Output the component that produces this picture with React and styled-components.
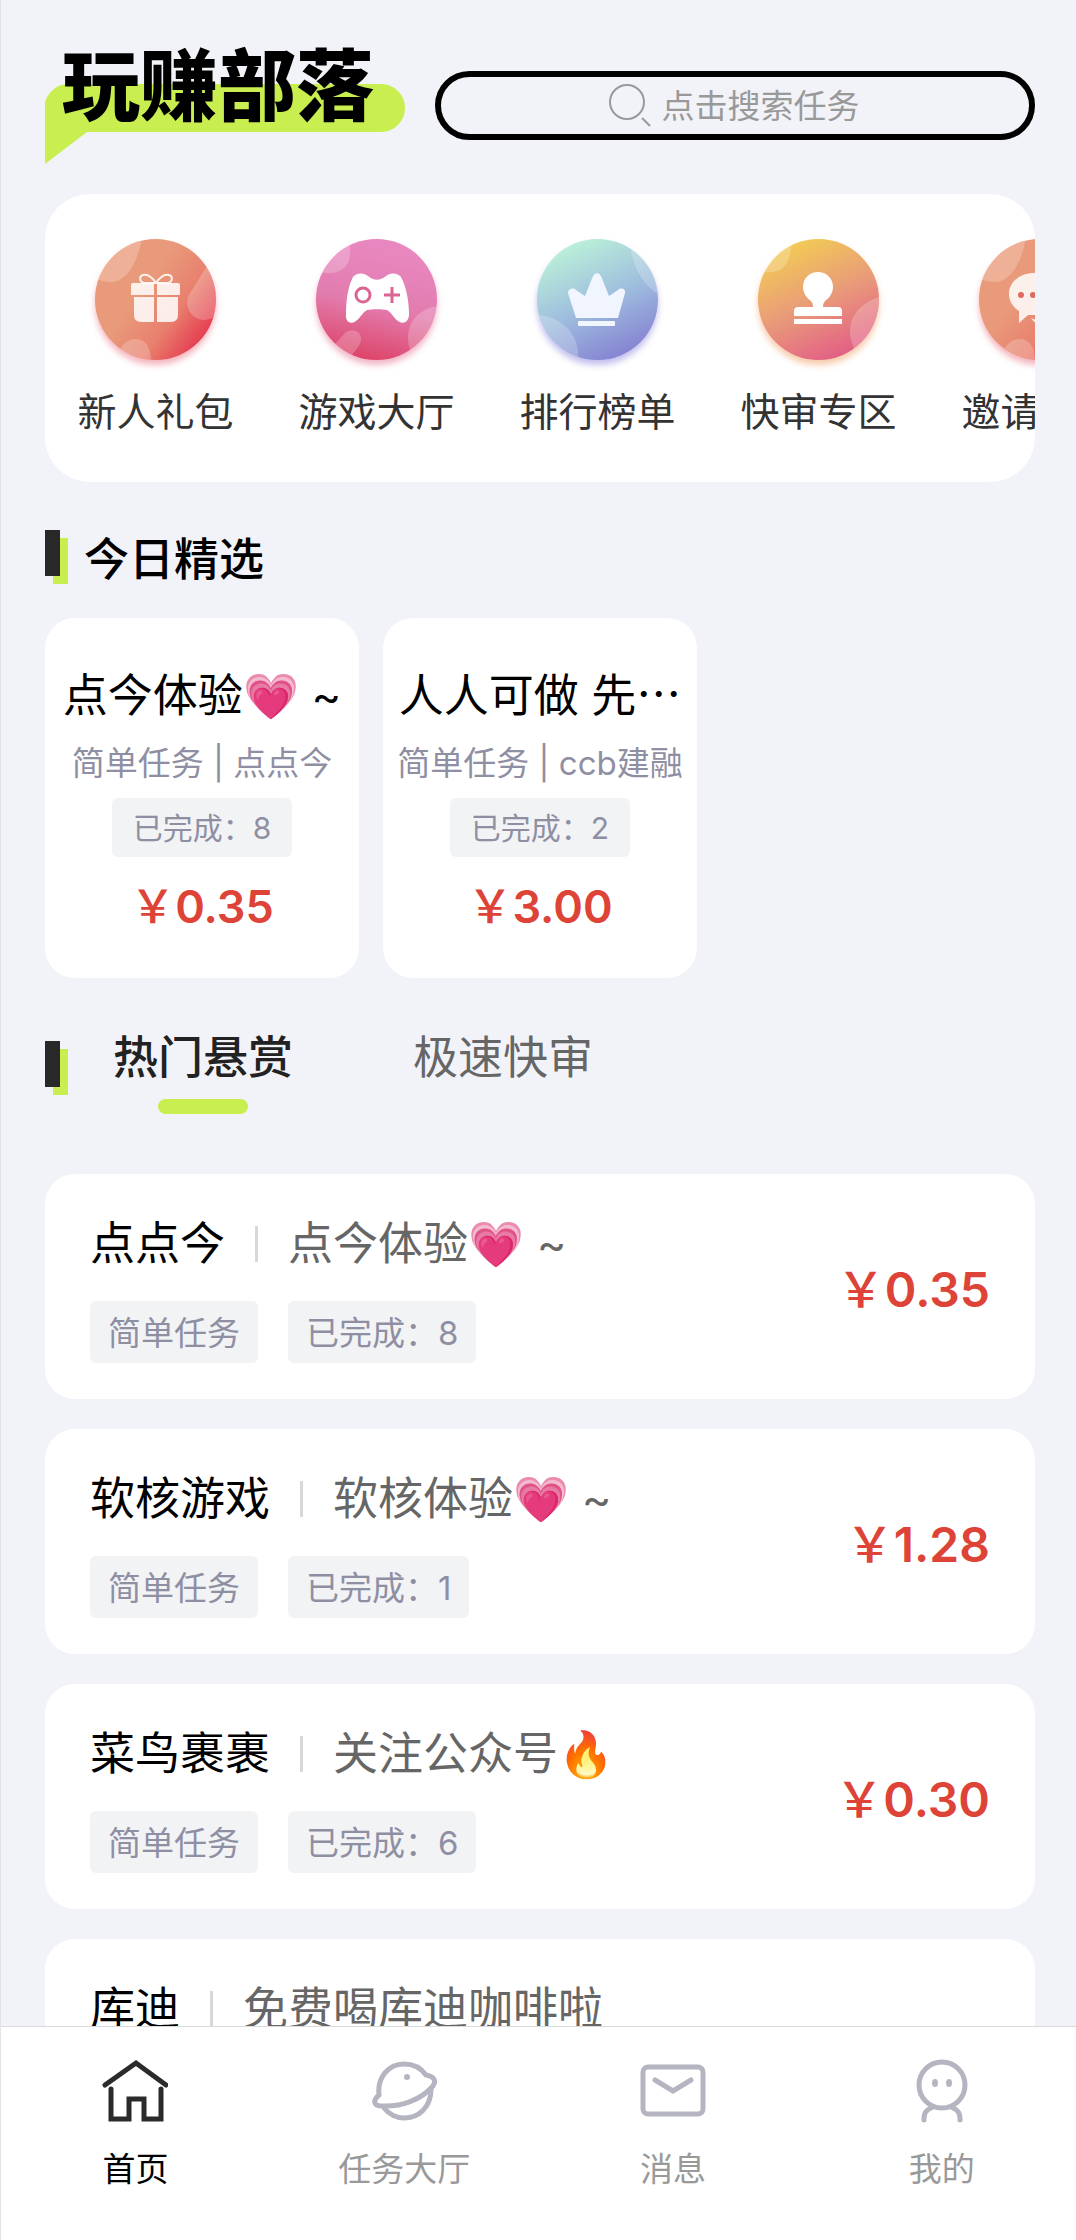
import React, { useState } from 'react';
import styled, { createGlobalStyle } from 'styled-components';

const quickLinks = [
  { label: '新人礼包', icon: 'gift', shadow: 'rgba(228, 70, 90, 0.4)' },
  { label: '游戏大厅', icon: 'game', shadow: 'rgba(221, 72, 112, 0.4)' },
  { label: '排行榜单', icon: 'crown', shadow: 'rgba(134, 128, 220, 0.5)' },
  { label: '快审专区', icon: 'stamp', shadow: 'rgba(240, 150, 90, 0.5)' },
  { label: '邀请好友', icon: 'chat', shadow: 'rgba(228, 70, 90, 0.4)' },
];

const picks = [
  { title: '点今体验💗 ~', type: '简单任务', brand: '点点今', done: 8, price: '0.35' },
  { title: '人人可做 先⋯', type: '简单任务', brand: 'ccb建融', done: 2, price: '3.00' },
];

const tasks = [
  { brand: '点点今', title: '点今体验💗 ~', type: '简单任务', done: 8, price: '0.35' },
  { brand: '软核游戏', title: '软核体验💗 ~', type: '简单任务', done: 1, price: '1.28' },
  { brand: '菜鸟裹裹', title: '关注公众号🔥', type: '简单任务', done: 6, price: '0.30' },
  { brand: '库迪', title: '免费喝库迪咖啡啦', type: '简单任务', done: 3, price: '0.50' },
];

const tabs = ['热门悬赏', '极速快审'];

const navItems = [
  { label: '首页', icon: 'home' },
  { label: '任务大厅', icon: 'planet' },
  { label: '消息', icon: 'mail' },
  { label: '我的', icon: 'person' },
];

const gradients = {
  gift: { dir: [0.4, 0.4, 0.95, 0.8], stops: ['#e99a7a', '#e8806e', '#e4364e'] },
  game: { dir: [0.6, 0.1, 0.4, 1], stops: ['#e887bf', '#e27cae', '#dd4468'] },
  crown: { dir: [0.25, 0.05, 0.7, 1], stops: ['#bbf0d8', '#9fbfde', '#8480d2'] },
  stamp: { dir: [0.25, 0.05, 0.7, 1], stops: ['#f2cb55', '#e99a7a', '#e25c86'] },
  chat: { dir: [0.4, 0.4, 0.95, 0.9], stops: ['#e99a7a', '#e8806e', '#e4364e'] },
};

const lobes = {
  gift: (
    <>
      <path d="M47-2C44 18 34 42 17 43C10 43 4 42-2 38V-2Z" />
      <path d="M112 27L94 56C89 64 94 80 108 81C114 81 118 79 122 76V27Z" />
      <path d="M24 112C28 104 34 100 41 100C50 100 56 108 56 122H24Z" />
    </>
  ),
  game: (
    <>
      <path d="M34-2V14C34 26 26 34 14 34C9 34 5 34-2 32V-2Z" />
      <path d="M122 67C106 69 92 80 92 98C92 104 93 108 95 114L122 122Z" />
      <path d="M18 106L29 94C35 89 45 91 45 100C45 105 41 110 34 118Z" />
    </>
  ),
  crown: (
    <>
      <path d="M93-2C93 18 100 42 122 56V-2Z" />
      <path d="M-2 76C22 76 44 94 41 122H-2Z" />
    </>
  ),
  stamp: (
    <>
      <path d="M34-2C34 16 29 29 20 32C14 33 8 34-2 33V-2Z" />
      <path d="M122 58C104 63 92 76 92 92C92 99 94 105 97 112L122 118Z" />
    </>
  ),
  chat: (
    <>
      <path d="M47-2C44 18 34 42 17 43C10 43 4 42-2 38V-2Z" />
      <path d="M24 112C28 104 34 100 41 100C50 100 56 108 56 122H24Z" />
    </>
  ),
};

const symbols = {
  gift: (
    <g fill="#fff" fillOpacity="0.85">
      <path d="M38 44H59V56H36V46Q36 44 38 44ZM62 44H83Q85 44 85 46V56H62Z" />
      <path d="M39 58H59V83H46Q39 83 39 76ZM62 58H83V76Q83 83 76 83H62Z" />
      <path
        d="M61 44C57 38 52 35 48 36C44 37 44 43 49 44ZM61 44C65 38 70 35 74 36C78 37 78 43 73 44Z"
        fill="none"
        stroke="#fff"
        strokeOpacity="0.85"
        strokeWidth="2"
      />
    </g>
  ),
  game: (
    <g>
      <path
        fill="#fff"
        d="M37 38C40 34 47 33 52 37C58 42 64 42 70 37C75 33 82 34 85 38C90 47 93 62 93 75C93 83 87 86 82 82C77 78 75 73 71 71C66 70 56 70 51 71C47 73 45 78 40 82C35 86 29 83 30 75C30 62 32 47 37 38Z"
      />
      <circle cx="47" cy="56" r="7" fill="none" stroke="#dc6495" strokeWidth="3" />
      <path d="M68 56H84M76 48V64" stroke="#dc6495" strokeWidth="3" />
    </g>
  ),
  crown: (
    <g fill="#f1f5ff">
      <path d="M39 79L31 54C31 50 36 48 39 51L48 57L56 37Q60 31 64 37L72 57L81 51C84 48 89 50 88 54L81 79Z" />
      <rect x="41" y="82" width="37" height="5" rx="1" />
    </g>
  ),
  stamp: (
    <g fill="#fff">
      <path d="M60 33C68 33 75 39 75 48C75 55 70 60 67 62Q65 64 65 68H80Q84 68 84 72V77H36V72Q36 68 40 68H55Q55 64 53 62C50 60 45 55 45 48C45 39 52 33 60 33Z" />
      <rect x="36" y="80" width="48" height="5" />
    </g>
  ),
  chat: (
    <g>
      <path
        fill="#fff"
        fillOpacity="0.85"
        d="M55 34C69 34 80 43 80 55C80 67 69 76 55 76L49 76L40 84V72C34 68 30 62 30 55C30 43 41 34 55 34Z"
      />
      <path fill="#fff" fillOpacity="0.85" d="M52 79C62 84 72 80 82 70C90 78 86 84 84 86V92L78 87C68 90 58 88 52 79Z" />
      <circle cx="42" cy="56" r="3" fill="#dd6a5c" />
      <circle cx="54" cy="56" r="3" fill="#dd6a5c" />
      <circle cx="66" cy="56" r="3" fill="#dd6a5c" />
    </g>
  ),
};

const navShapes = {
  home: (
    <>
      <path d="M3 27L34 5L64 27" />
      <path d="M9 31V61H27V41H42V61H59V31" />
    </>
  ),
  planet: (
    <>
      <path d="M8 37C6 20 17 6 33 6C43 6 50 10 55 17C62 18 66 22 62 28C50 42 30 49 11 48C3 48 1 43 8 37Z" />
      <path d="M13 50C18 56 25 60 33 60C48 60 60 49 60 31" />
      <circle cx="36" cy="19" r="3" fill="currentColor" stroke="none" />
    </>
  ),
  mail: (
    <>
      <rect x="3" y="9" width="60" height="47" rx="5" />
      <path d="M15 22L33 33L51 22" />
    </>
  ),
  person: (
    <>
      <circle cx="33" cy="27" r="23" />
      <ellipse cx="26" cy="25" rx="3" ry="4" fill="currentColor" stroke="none" />
      <ellipse cx="40" cy="25" rx="3" ry="4" fill="currentColor" stroke="none" />
      <path d="M15 62V60Q15 53 22 50M51 62V60Q51 53 44 50" />
    </>
  ),
};

const QuickIcon = ({ name, shadow }) => {
  const { dir, stops } = gradients[name];
  return (
    <QuickSvg viewBox="0 0 121 121" $shadow={shadow} aria-hidden="true">
      <defs>
        <linearGradient id={`fill-${name}`} x1={dir[0]} y1={dir[1]} x2={dir[2]} y2={dir[3]}>
          <stop offset="0" stopColor={stops[0]} />
          <stop offset="0.5" stopColor={stops[1]} />
          <stop offset="1" stopColor={stops[2]} />
        </linearGradient>
        <clipPath id={`clip-${name}`}>
          <circle cx="60.5" cy="60.5" r="60.5" />
        </clipPath>
      </defs>
      <circle cx="60.5" cy="60.5" r="60.5" fill={`url(#fill-${name})`} />
      <g clipPath={`url(#clip-${name})`} fill="#fff" fillOpacity="0.22">
        {lobes[name]}
      </g>
      {symbols[name]}
    </QuickSvg>
  );
};

const Logo = () => (
  <LogoSvg viewBox="0 0 360 117" role="img" aria-label="玩赚部落">
    <path d="M0 55C4 44 12 37 24 37H336A24 24 0 0 1 336 85H42L0 117Z" fill="#c8ef4f" />
    <LogoText x="17" y="68">玩赚部落</LogoText>
  </LogoSvg>
);

const App = () => {
  const [tab, setTab] = useState(tabs[0]);
  const [page, setPage] = useState('首页');

  return (
    <Screen>
      <GlobalStyle />
      <Content>
        <Header>
          <Logo />
          <SearchBox>
            <SearchSvg viewBox="0 0 42 43" aria-hidden="true">
              <circle cx="18" cy="18" r="17" />
              <path d="M33 34L41 42" />
            </SearchSvg>
            <SearchInput type="text" placeholder="点击搜索任务" aria-label="搜索任务" />
          </SearchBox>
        </Header>

        <QuickCard>
          {quickLinks.map((item) => (
            <QuickLink href="#" key={item.label}>
              <QuickIcon name={item.icon} shadow={item.shadow} />
              <span>{item.label}</span>
            </QuickLink>
          ))}
        </QuickCard>

        <SectionHead>
          <Marker />
          <SectionTitle>今日精选</SectionTitle>
        </SectionHead>

        <PickRow>
          {picks.map((item) => (
            <PickCard key={item.title}>
              <PickTitle>{item.title}</PickTitle>
              <PickMeta>{item.type} | {item.brand}</PickMeta>
              <Tag $small>已完成：{item.done}</Tag>
              <PickPrice><Yen>￥</Yen>{item.price}</PickPrice>
            </PickCard>
          ))}
        </PickRow>

        <TabRow>
          <Marker $low />
          <TabList role="tablist">
            {tabs.map((name) => (
              <Tab
                key={name}
                type="button"
                role="tab"
                aria-selected={tab === name}
                $active={tab === name}
                onClick={() => setTab(name)}
              >
                {name}
              </Tab>
            ))}
          </TabList>
        </TabRow>

        <TaskList>
          {tasks.map((task) => (
            <TaskCard key={task.brand}>
              <div>
                <TaskHead>
                  <Brand>{task.brand}</Brand>
                  <Divider />
                  <TaskTitle>{task.title}</TaskTitle>
                </TaskHead>
                <TagRow>
                  <Tag>{task.type}</Tag>
                  <Tag>已完成：{task.done}</Tag>
                </TagRow>
              </div>
              <Price><Yen>￥</Yen>{task.price}</Price>
            </TaskCard>
          ))}
        </TaskList>
      </Content>

      <NavBar>
        {navItems.map((item) => (
          <NavLink
            href="#"
            key={item.label}
            $active={page === item.label}
            onClick={() => setPage(item.label)}
          >
            <NavSvg viewBox="0 0 66 66" $active={page === item.label} aria-hidden="true">
              {navShapes[item.icon]}
            </NavSvg>
            <span>{item.label}</span>
          </NavLink>
        ))}
      </NavBar>
    </Screen>
  );
};

const GlobalStyle = createGlobalStyle`
  * {
    box-sizing: border-box;
  }
  body {
    margin: 0;
    background: #f2f3f8;
    font-family: Inter, "Noto Sans CJK SC", sans-serif;
    color: #000;
  }
  h2, h3, p, ul {
    margin: 0;
    padding: 0;
  }
  a {
    color: inherit;
    text-decoration: none;
  }
`;

const Screen = styled.div`
  display: flex;
  flex-direction: column;
  height: 100vh;
  border-left: 1px solid #e2e3e8;
`;

const Content = styled.main`
  flex: 1;
  min-height: 0;
  overflow-y: auto;
  scrollbar-width: none;
  padding: 47px 41px 30px 44px;
`;

const Header = styled.header`
  display: flex;
  align-items: center;
  gap: 30px;
  margin-bottom: 30px;
`;

const LogoSvg = styled.svg`
  flex: none;
  width: 360px;
  height: 117px;
  overflow: visible;
`;

const LogoText = styled.text`
  font-family: "Noto Sans CJK SC", sans-serif;
  font-size: 78px;
  font-weight: 900;
`;

const SearchBox = styled.label`
  flex: 1;
  display: flex;
  align-items: center;
  justify-content: center;
  gap: 11px;
  height: 69px;
  border: 6px solid #000;
  border-radius: 35px;
`;

const SearchSvg = styled.svg`
  flex: none;
  width: 42px;
  height: 43px;
  fill: none;
  stroke: #999;
  stroke-width: 2;
`;

const SearchInput = styled.input`
  width: 200px;
  padding: 0;
  border: none;
  outline: none;
  background: none;
  font-family: inherit;
  font-size: 33px;
  line-height: 48px;
  &::placeholder {
    color: #999;
    opacity: 1;
  }
`;

const QuickCard = styled.nav`
  display: flex;
  overflow-x: auto;
  scrollbar-width: none;
  padding: 45px 0 43px;
  background: #fff;
  border-radius: 45px;
`;

const QuickLink = styled.a`
  flex: 0 0 221px;
  display: flex;
  flex-direction: column;
  align-items: center;
  gap: 25px;
  font-size: 39px;
  line-height: 54px;
  color: #333;
`;

const QuickSvg = styled.svg`
  width: 121px;
  height: 121px;
  overflow: visible;
  filter: drop-shadow(0 5px 3px ${({ $shadow }) => $shadow});
`;

const SectionHead = styled.div`
  display: flex;
  gap: 24px;
  margin: 48px 0 28px;
`;

const Marker = styled.span`
  flex: none;
  width: 15px;
  height: 46px;
  margin-top: ${({ $low }) => ($low ? '13px' : '0')};
  background: #282828;
  box-shadow: 8px 8px 0 #c8ef4f;
`;

const SectionTitle = styled.h2`
  font-size: 45px;
  line-height: 60px;
  font-weight: 500;
`;

const PickRow = styled.div`
  display: flex;
  gap: 24px;
`;

const PickCard = styled.article`
  display: flex;
  flex-direction: column;
  align-items: center;
  width: 314px;
  padding: 48px 12px 41px;
  background: #fff;
  border-radius: 30px;
  white-space: nowrap;
`;

const PickTitle = styled.h3`
  font-size: 45px;
  line-height: 60px;
  font-weight: 400;
`;

const PickMeta = styled.p`
  margin: 13px 0 11px;
  font-size: 33px;
  line-height: 48px;
  color: #8f8fa3;
`;

const Tag = styled.span`
  padding: ${({ $small }) => ($small ? '2px 21px 0' : '2px 18px 0')};
  font-size: ${({ $small }) => ($small ? '30px' : '33px')};
  line-height: ${({ $small }) => ($small ? '57px' : '60px')};
  color: #8f8fa3;
  background: #f2f3f5;
  border-radius: 6px;
`;

const Price = styled.strong`
  padding-top: 2px;
  font-size: 48px;
  line-height: 60px;
  font-weight: 600;
  color: #dd4337;
`;

const PickPrice = styled(Price)`
  margin-top: 18px;
  font-size: 45px;
`;

const Yen = styled.span`
  font-weight: 500;
`;

const TabRow = styled.div`
  display: flex;
  gap: 53px;
  margin: 50px 0 60px;
`;

const TabList = styled.div`
  display: flex;
  gap: 120px;
`;

const Tab = styled.button`
  display: flex;
  flex-direction: column;
  align-items: center;
  gap: 11px;
  padding: 0;
  border: none;
  background: none;
  font-family: inherit;
  font-size: 45px;
  line-height: 60px;
  font-weight: ${({ $active }) => ($active ? 500 : 400)};
  color: ${({ $active }) => ($active ? '#222' : '#666')};
  cursor: pointer;
  &::after {
    content: '';
    width: 90px;
    height: 15px;
    border-radius: 8px;
    background: ${({ $active }) => ($active ? '#c8ef4f' : 'transparent')};
  }
`;

const TaskList = styled.ul`
  display: flex;
  flex-direction: column;
  gap: 30px;
  list-style: none;
`;

const TaskCard = styled.li`
  display: flex;
  align-items: center;
  justify-content: space-between;
  padding: 40px 45px 36px;
  background: #fff;
  border-radius: 30px;
`;

const TaskHead = styled.div`
  display: flex;
  align-items: center;
  gap: 30px;
  height: 60px;
  margin-bottom: 27px;
  font-size: 45px;
  line-height: 60px;
`;

const Brand = styled.h3`
  font-size: 45px;
  font-weight: 400;
`;

const Divider = styled.span`
  width: 3px;
  height: 36px;
  background: #d8d8d8;
`;

const TaskTitle = styled.span`
  color: #666;
`;

const TagRow = styled.div`
  display: flex;
  gap: 30px;
`;

const NavBar = styled.nav`
  flex: none;
  display: flex;
  padding: 31px 0 47px;
  background: #fff;
  border-top: 1px solid #d9dadc;
`;

const NavLink = styled.a`
  flex: 1;
  display: flex;
  flex-direction: column;
  align-items: center;
  gap: 21px;
  font-size: 33px;
  line-height: 48px;
  color: ${({ $active }) => ($active ? '#000' : '#999')};
`;

const NavSvg = styled.svg`
  width: 66px;
  height: 66px;
  color: ${({ $active }) => ($active ? '#2b2b2b' : '#b4b5c1')};
  fill: none;
  stroke: currentColor;
  stroke-width: 5;
  stroke-linecap: round;
`;

export default App;
